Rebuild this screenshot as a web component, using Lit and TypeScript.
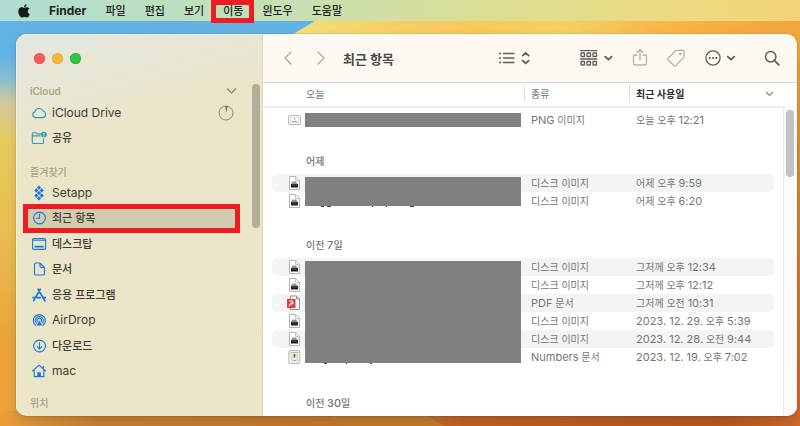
import { LitElement, html, svg, css, nothing, TemplateResult } from "lit";
import { customElement, property } from "lit/decorators.js";
import { classMap } from "lit/directives/class-map.js";

const latinRun = /([A-Za-z0-9.:]+(?: [A-Za-z0-9.:]+)*)/;

/** Sets Latin letters and digits one step larger than the Hangul beside them. */
const mixed = (text: string) =>
  text.split(latinRun).map((part, i) => (i % 2 ? html`<span class="latin">${part}</span>` : part));

const mixedStyles = css`
  .latin {
    font-size: 11px;
  }
`;

const shared = css`
  :host,
  * {
    box-sizing: border-box;
  }
  button {
    font: inherit;
    color: inherit;
    background: none;
    border: 0;
    padding: 0;
    margin: 0;
  }
  svg {
    display: block;
    flex: none;
  }
`;

const sidebarIcons: Record<string, TemplateResult> = {
  cloud: svg`<path d="M4.600 12.600a3 3 0 0 1-.6-5.900A4.300 4.300 0 0 1 12.100 6a3.400 3.400 0 0 1-.2 6.600z" />`,
  shared: svg`<path d="M10 3.900H6.600L5.500 2.700H2.300Q1.300 2.700 1.300 3.800v8.600q0 1.100 1.100 1.100h9q1.100 0 1.100-1.100V9M1.300 5.900H9" />
    <circle class="solid" cx="12.900" cy="4.600" r="2.900" />
    <circle class="hole" cx="12.900" cy="3.800" r="0.900" /><path class="hole" d="M11.400 6.500q1.500-2 3 0z" />`,
  setapp: svg`<g class="solid">
    <path d="M8 .6l2.100 2.100L8 4.800 5.900 2.700z" /><path d="M5.300 3.300l2.100 2.100-2.100 2.100-2.100-2.100z" /><path d="M10.700 3.300l2.100 2.100-2.100 2.100-2.100-2.100z" />
    <path d="M8 5.900l2.100 2.100L8 10.100 5.900 8z" /><path d="M5.300 8.500l2.100 2.100-2.100 2.100-2.100-2.100z" /><path d="M10.700 8.500l2.100 2.100-2.100 2.100-2.100-2.100z" />
    <path d="M8 11.200l2.100 2.100L8 15.400l-2.100-2.100z" /></g>`,
  clock: svg`<circle cx="8.500" cy="8" r="5.900" /><path d="M8.500 4.300V8.300H5.300" />`,
  desktop: svg`<rect x="1.600" y="2.600" width="13" height="10.800" rx="1.200" /><path d="M1.600 4.300h13" /><path class="thick" d="M4.300 10.700h7.600" />`,
  document: svg`<path d="M9 2H4.800Q3.500 2 3.500 3.300v9.400Q3.500 14 4.800 14h7.400q1.300 0 1.300-1.300V6.500zM9 2v3.300q0 1.200 1.200 1.200h3.300" />`,
  apps: svg`<path class="thick" d="M7.100 2.200l4.800 8.300 2 3.300M9.300 2.200L4.500 10.500M1.900 10.600h7.300M11.900 10.600h2.500M3.500 12.300l-.8 1.400" />`,
  airdrop: svg`<path d="M4.900 13.600a6 6 0 1 1 6.800 0M5.600 11.700a4.100 4.100 0 1 1 5.400 0M6.700 9.900a2.200 2.200 0 1 1 3.200 0" />
    <path class="solid" d="M8.300 8.600l2.600 4.800H5.700z" />`,
  download: svg`<circle cx="8.500" cy="8" r="5.900" /><path d="M8.500 4.700v6.200M6.200 8.700l2.300 2.400 2.300-2.400" />`,
  home: svg`<path d="M1.500 8L8 2.200 14.500 8M3.200 7v6.600h9.700V7M12.200 5.600V3.200" /><path class="solid" d="M6.300 13.600V9.200h3.500v4.400z" />`,
};

@customElement("desktop-wallpaper")
class DesktopWallpaper extends LitElement {
  static styles = css`
    :host {
      display: block;
    }
    svg {
      display: block;
      width: 100%;
      height: 100%;
    }
  `;
  render() {
    return html`<svg viewBox="0 0 800 426" preserveAspectRatio="none" aria-hidden="true">
      <defs>
        <linearGradient id="top" gradientUnits="userSpaceOnUse" x1="0" x2="800"><stop offset="0.350" stop-color="#f4e07e" /><stop offset="0.500" stop-color="#f8ce62" /><stop offset="0.600" stop-color="#f7c859" />
          <stop offset="0.700" stop-color="#f5d164" /><stop offset="0.800" stop-color="#f7bd4d" /><stop offset="0.880" stop-color="#f6b042" /><stop offset="1" stop-color="#f2a53a" /></linearGradient>
        <linearGradient id="left" x2="0" y2="1"><stop offset="0.130" stop-color="#62b3e4" /><stop offset="0.190" stop-color="#8ebfce" />
          <stop offset="0.240" stop-color="#d3ca9f" /><stop offset="0.330" stop-color="#e6c95f" /><stop offset="0.550" stop-color="#e8bd51" /><stop offset="0.800" stop-color="#e9a33c" /><stop offset="1" stop-color="#ee9f3b" /></linearGradient>
        <linearGradient id="bottom" gradientUnits="userSpaceOnUse" x1="0" x2="800"><stop offset="0" stop-color="#ec9f3b" /><stop offset="0.050" stop-color="#d68d36" /><stop offset="0.120" stop-color="#c47c31" /><stop offset="0.500" stop-color="#bf7129" />
          <stop offset="0.580" stop-color="#bb5f22" /><stop offset="0.900" stop-color="#b1571f" /><stop offset="0.970" stop-color="#c06025" /><stop offset="1" stop-color="#d0672b" /></linearGradient>
        <linearGradient id="right" x2="0" y2="1"><stop offset="0" stop-color="#f0a238" /><stop offset="0.300" stop-color="#d98a30" /><stop offset="1" stop-color="#d0652a" /></linearGradient>
      </defs>
      <rect width="800" height="426" fill="url(#left)" />
      <path d="M0 21h315L290 36H0z" fill="#62b3e4" />
      <path d="M315 21H800v100H290V36z" fill="url(#top)" />
      <rect x="700" y="60" width="100" height="350" fill="url(#right)" />
      <rect y="410" width="800" height="16" fill="url(#bottom)" />
      <path d="M326 412l16 14h104l-24-14z" fill="#bf782b" />
    </svg>`;
  }
}

@customElement("menu-bar")
class MenuBar extends LitElement {
  static menus = ["파일", "편집", "보기", "이동", "윈도우", "도움말"];
  static styles = [
    shared,
    css`
      :host {
        display: flex;
        align-items: center;
        gap: 19px;
        height: 21px;
        padding: 0 18px;
        color: #1d241f;
        font-size: 11px;
        font-weight: 500;
        line-height: 16px;
        background: linear-gradient(90deg, #b0dcd5, #bbdfc2 18%, #c8e0b2 38%, #dcde92 62%, #ecda80 85%, #f4d378);
      }
      .app {
        font-size: 12px;
        font-weight: 700;
      }
      .menu {
        position: relative;
        white-space: nowrap;
      }
      .marked::after {
        content: "";
        position: absolute;
        inset: -3px -11px -4px -12px;
        border: 5px solid #ee1c24;
      }
    `,
  ];
  render() {
    return html`
      <button class="menu" aria-label="Apple">
        <svg width="12" height="14" viewBox="0 0 12 14" fill="#161c19">
          <path d="M8.600.3c.1 1.500-1.200 2.900-2.600 2.900C5.800 1.800 7.200.4 8.600.3zM6.200 3.900c.6 0 1.300-.6 2.500-.6 1.100 0 2.100.6 2.700 1.400-2.300 1.300-2 4.600.4 5.600-.5 1.400-1.700 3.300-2.900 3.300-.9 0-1.300-.5-2.400-.5s-1.500.5-2.300.5C2.500 13.600.3 10.300.3 7.400c0-2.700 1.700-4.100 3.400-4.100 1.100 0 1.900.6 2.500.6z" />
        </svg>
      </button>
      <button class="menu app">Finder</button>
      ${MenuBar.menus.map((m) => html`<button class=${classMap({ menu: true, marked: m === "이동" })}>${m}</button>`)}
    `;
  }
}

interface Place {
  icon: string;
  label: string;
  teal?: boolean;
  progress?: boolean;
  current?: boolean;
}

@customElement("finder-sidebar")
class FinderSidebar extends LitElement {
  static cloud: Place[] = [
    { icon: "cloud", label: "iCloud Drive", teal: true, progress: true },
    { icon: "shared", label: "공유", teal: true },
  ];
  static favourites: Place[] = [
    { icon: "setapp", label: "Setapp" },
    { icon: "clock", label: "최근 항목", current: true },
    { icon: "desktop", label: "데스크탑" },
    { icon: "document", label: "문서" },
    { icon: "apps", label: "응용 프로그램" },
    { icon: "airdrop", label: "AirDrop" },
    { icon: "download", label: "다운로드" },
    { icon: "home", label: "mac" },
  ];
  static styles = [
    shared,
    css`
      :host {
        position: relative;
        display: flex;
        flex-direction: column;
        background: linear-gradient(165deg, #e3e7e1 0, #e8e6d6 12%, #eae5c8 28%, #ebe6c8);
        border-right: 1px solid #e0d9b4;
        box-shadow: inset 1px 1px 0 #f3f1e2;
        color: #3d3e33;
        font-size: 11px;
        font-weight: 500;
      }
      .lights {
        display: flex;
        align-items: center;
        gap: 7px;
        height: 48px;
        padding-left: 18px;
      }
      .light {
        width: 11px;
        height: 11px;
        border-radius: 50%;
        background: #fc5b57;
        box-shadow: inset 0 0 0 1px #e2463f80;
      }
      .minimise {
        background: #fbb53f;
        box-shadow: inset 0 0 0 1px #dfa02e80;
      }
      .zoom {
        background: #2fc546;
        box-shadow: inset 0 0 0 1px #1fa83480;
      }
      h2 {
        display: flex;
        align-items: center;
        justify-content: space-between;
        margin: 0;
        height: 18px;
        padding: 0 25px 0 14px;
        font-size: 10px;
        font-weight: 500;
        color: #a19e87;
      }
      ul {
        display: flex;
        flex-direction: column;
        list-style: none;
        margin: 0 27px 11px 12px;
        padding: 0;
      }
      .cloud-list {
        min-height: 51px;
      }
      .favourites {
        min-height: 204px;
        margin-bottom: 9px;
      }
      li {
        display: flex;
        flex: 1;
        align-items: center;
      }
      .place {
        position: relative;
        display: flex;
        align-items: center;
        gap: 5px;
        width: 100%;
        height: 19px;
        padding-left: 3px;
        text-align: left;
        line-height: 18px;
      }
      .place .word {
        flex: 1;
      }
      .place.latin-name {
        font-size: 12px;
        font-weight: 400;
      }
      .current {
        background: #d1ccae;
      }
      .current::after {
        content: "";
        position: absolute;
        inset: -5px;
        border: 5px solid #ee1c24;
      }
      .glyph {
        fill: none;
        stroke: #1b77e0;
        stroke-width: 1.100;
        stroke-linecap: round;
        stroke-linejoin: round;
      }
      .glyph.teal {
        stroke: #2b9fae;
      }
      .solid {
        fill: #1273ea;
        stroke: none;
      }
      .teal .solid {
        fill: #2b9fae;
      }
      .hole {
        fill: #ebe6c8;
        stroke: none;
      }
      .thick {
        stroke-width: 1.700;
      }
      .line {
        fill: none;
        stroke: #8d8a76;
      }
      .thumb {
        position: absolute;
        top: 50px;
        right: 2px;
        width: 8px;
        height: 144px;
        border-radius: 4px;
        background: #b2af99;
      }
    `,
  ];
  private place(p: Place) {
    return html`<li>
      <button class=${classMap({ place: true, current: !!p.current, "latin-name": /^[A-Za-z ]+$/.test(p.label) })}>
        <svg class=${classMap({ glyph: true, teal: !!p.teal })} width="16" height="16" viewBox="0 0 16 16">${sidebarIcons[p.icon]}</svg>
        <span class="word">${p.label}</span>
        ${p.progress
          ? html`<svg class="line" width="17" height="16" viewBox="0 0 17 16"><circle cx="8" cy="8" r="7" /><path fill="#6f6d5c" stroke="none" d="M8 8L7.300 1h2.500z" /></svg>`
          : nothing}
      </button>
    </li>`;
  }
  render() {
    return html`
      <div class="lights">
        <button class="light" aria-label="닫기"></button>
        <button class="light minimise" aria-label="최소화"></button>
        <button class="light zoom" aria-label="확대"></button>
      </div>
      <h2>iCloud <svg class="line" width="11" height="8" viewBox="0 0 11 8"><path stroke-width="1.300" d="M1 1.500l4.500 4.500L10 1.500" /></svg></h2>
      <ul class="cloud-list">${FinderSidebar.cloud.map((p) => this.place(p))}</ul>
      <h2>즐겨찾기</h2>
      <ul class="favourites">${FinderSidebar.favourites.map((p) => this.place(p))}</ul>
      <h2>위치</h2>
      <div class="thumb"></div>
    `;
  }
}

@customElement("finder-toolbar")
class FinderToolbar extends LitElement {
  static styles = [
    shared,
    css`
      :host {
        display: flex;
        align-items: center;
        height: 49px;
        padding: 0 17px;
        background: #fdf8f2;
        border-bottom: 1px solid #dad7d3;
      }
      svg {
        fill: none;
        stroke: #5f5e5b;
        stroke-width: 1.300;
        stroke-linecap: round;
        stroke-linejoin: round;
      }
      .faint svg {
        stroke: #b4b1ad;
      }
      .bold {
        stroke-width: 1.800;
      }
      .dot {
        fill: #5f5e5b;
        stroke: none;
      }
      h1 {
        flex: 1;
        margin: 0;
        padding-left: 14px;
        font-size: 13px;
        font-weight: 700;
        color: #4a4947;
        white-space: nowrap;
      }
      .nav {
        display: flex;
        gap: 17px;
      }
      .tools {
        display: flex;
        align-items: center;
        gap: 19px;
      }
      .view {
        margin-right: 31px;
      }
      .search {
        margin-left: 8px;
      }
    `,
  ];
  render() {
    return html`
      <div class="nav">
        <button class="faint" aria-label="뒤로"><svg width="16" height="16" viewBox="0 0 16 16"><path stroke-width="1.500" d="M11 2L5 8l6 6" /></svg></button>
        <button class="faint" aria-label="앞으로"><svg width="16" height="16" viewBox="0 0 16 16"><path stroke-width="1.500" d="M5 2l6 6-6 6" /></svg></button>
      </div>
      <h1>최근 항목</h1>
      <div class="tools">
        <button class="view" aria-label="목록">
          <svg width="32" height="16" viewBox="0 0 32 16">
            <path d="M5.500 3.500h10.500M5.500 8h10.500M5.500 12.500h10.500" />
            <circle class="dot" cx="2" cy="3.500" r="1" /><circle class="dot" cx="2" cy="8" r="1" /><circle class="dot" cx="2" cy="12.500" r="1" />
            <path class="bold" d="M24.700 5.600L27.700 2.800l3 2.800M24.700 10.600l3 2.800 3-2.800" />
          </svg>
        </button>
        <button aria-label="그룹">
          <svg width="33" height="18" viewBox="0 0 33 18">
            <path d="M.7 1.600h16M.7 10h16" />
            <rect x="1" y="4" width="3.500" height="3.500" rx=".6" /><rect x="7" y="4" width="3.500" height="3.500" rx=".6" /><rect x="13" y="4" width="3.500" height="3.500" rx=".6" />
            <rect x="1" y="12.500" width="3.500" height="3.500" rx=".6" /><rect x="7" y="12.500" width="3.500" height="3.500" rx=".6" /><rect x="13" y="12.500" width="3.500" height="3.500" rx=".6" />
            <path class="bold" d="M25.200 7.700l3.200 3 3.200-3" />
          </svg>
        </button>
        <button class="faint" aria-label="공유">
          <svg width="16" height="20" viewBox="0 0 16 20"><path d="M5 7H2.800Q1.500 7 1.500 8.300v7.400q0 1.300 1.300 1.300h10.400q1.300 0 1.300-1.300V8.300Q14.500 7 13.200 7H11M8 12V1.500M5.300 4.200L8 1.500l2.700 2.700" /></svg>
        </button>
        <button class="faint" aria-label="태그">
          <svg width="18" height="18" viewBox="0 0 18 18"><path d="M10 1.400l5-.2q2 0 2 2v4q0 1-.7 1.700l-7.400 7.500q-1.100 1-2.200 0L1.300 11.200q-1-1.100 0-2.200L8.500 2q.6-.6 1.500-.6z" /><circle cx="13.200" cy="5" r=".6" /></svg>
        </button>
        <button aria-label="더 보기">
          <svg width="33" height="18" viewBox="0 0 33 18"><circle cx="9" cy="9" r="7.100" /><circle class="dot" cx="5.700" cy="9" r="1.100" /><circle class="dot" cx="9" cy="9" r="1.100" /><circle class="dot" cx="12.300" cy="9" r="1.100" /><path class="bold" d="M23.800 7.700l3.200 3 3.200-3" /></svg>
        </button>
        <button class="search" aria-label="검색">
          <svg width="16" height="16" viewBox="0 0 16 16"><circle stroke-width="1.500" cx="6.700" cy="6.700" r="5.200" /><path class="bold" d="M10.700 10.700l4.100 4.100" /></svg>
        </button>
      </div>
    `;
  }
}

type FileKind = "png" | "dmg" | "pdf" | "numbers";
interface FileRow {
  icon: FileKind;
  kind: string;
  date: string;
}
interface FileGroup {
  name: string;
  /** Tips of the covered names that show below the grey block, as a path. */
  tips?: string;
  rows: FileRow[];
}

const fileIcons: Record<FileKind, TemplateResult> = {
  png: svg`<rect x=".5" y="3.500" width="12" height="9" rx="1.500" fill="#f4f5f5" stroke="#b9bcbc" /><rect x="2.500" y="5.500" width="8" height="5" fill="#fff" stroke="#cfd3d2" stroke-width=".7" /><path d="M4 9.500h5M6.500 6.300v2" stroke="#8ea7a4" stroke-width=".9" />`,
  dmg: svg`<path d="M1.500 1.500h6l4 4v9h-10z" fill="#fff" stroke="#b5b5b5" /><path d="M7.500 1.500v4h4" fill="none" stroke="#b5b5b5" stroke-width=".8" /><path d="M4.500 6.500h3.500l1.700 2.500H3z" fill="#8c9792" /><path d="M3 9h7v3.500H3z" fill="#17201d" /><path d="M4 10h5" stroke="#68756f" stroke-width=".7" />`,
  pdf: svg`<path d="M2.500 1h6l3 3v10.500h-9z" fill="#fff" stroke="#8e9494" /><path d="M8.500 1v3h3" fill="none" stroke="#8e9494" /><rect x="-1" y="4" width="8.500" height="9" fill="#e8393c" /><path d="M1.300 6.200q2.500-1 3.500.5 0 1.800-2.800 2.200M.8 11.300q1.400-2.500 2.800-2.400t1.800-.8" fill="none" stroke="#fff" stroke-width="1.100" />`,
  numbers: svg`<rect x=".8" y="1.500" width="11" height="13" rx="1" fill="#eeefee" stroke="#b7b9b8" /><path d="M2.500 3.500h7.800" stroke="#e3b45f" /><path d="M3 6h1.600M8.500 6h1.600M3 8.500h1.600M8.500 8.500h1.600M3 11h2M8 11h2" stroke="#b7b9b8" /><path d="M6.500 5v3.500" stroke="#4d5451" stroke-width="1.600" /><path d="M5.700 11.500h1.800" stroke="#777d7a" />`,
};

@customElement("file-list")
class FileList extends LitElement {
  @property({ attribute: false }) groups: FileGroup[] = [];
  static styles = [
    shared,
    mixedStyles,
    css`
      :host {
        display: flex;
        flex: 1;
        background: #fff;
        color: #757575;
        font-size: 10px;
        line-height: 18px;
      }
      table {
        display: block;
        flex: 1;
        min-width: 0;
      }
      thead,
      tbody,
      td,
      th {
        display: block;
      }
      td,
      th {
        padding: 0;
        text-align: left;
        font-weight: 400;
        white-space: nowrap;
      }
      tr {
        display: grid;
        grid-template-columns: minmax(0, 1fr) 105px 145px;
        align-items: center;
        margin: 0 9px;
      }
      .columns {
        height: 25px;
        margin: 0;
        padding: 0 9px 2px;
        border-bottom: 2px solid #ececec;
      }
      .columns th + th {
        display: flex;
        align-items: center;
        justify-content: space-between;
        height: 17px;
        padding-left: 6px;
        border-left: 1px solid #dcdcdc;
      }
      .first {
        padding-left: 34px;
      }
      .columns .sorted {
        font-weight: 700;
        color: #2c2c2c;
      }
      tbody {
        position: relative;
      }
      .today {
        padding-top: 3px;
      }
      .file {
        height: 18px;
        border-radius: 5px;
      }
      .striped .file:nth-child(even) {
        background: #f3f4f4;
      }
      .file td {
        padding-left: 7px;
      }
      .file .name {
        padding-left: 16px;
      }
      .name svg {
        overflow: visible;
      }
      .heading {
        grid-template-columns: 1fr;
        align-items: end;
        height: 48px;
        padding: 0 0 4px 34px;
      }
      .today + tbody .heading {
        height: 45px;
      }
      tbody:last-child {
        padding-top: 2px;
      }
      .heading th {
        font-weight: 500;
      }
      .cover {
        display: block;
        position: absolute;
        left: 33px;
        right: 253px;
        top: 51px;
        bottom: 3px;
        background: #808080;
      }
      .today .cover {
        top: 5px;
        bottom: 2px;
      }
      .today + tbody .cover {
        top: 48px;
        bottom: 4px;
      }
      .cover td {
        position: absolute;
        top: 100%;
        left: 0;
      }
      .scroll {
        width: 14px;
        margin-top: 24px;
        padding: 3px 3px 0 2px;
        background: #fafafa;
        border-left: 1px solid #e9e9e9;
      }
      .thumb {
        height: 67px;
        border-radius: 4px;
        background: #c2c2c2;
      }
    `,
  ];
  render() {
    return html`
      <table>
        <thead>
          <tr class="columns">
            <th class="first" scope="col">오늘</th>
            <th scope="col">종류</th>
            <th class="sorted" scope="col">최근 사용일 <svg width="9" height="6" viewBox="0 0 9 6" fill="none" stroke="#888" stroke-width="1.200"><path d="M1 1l3.500 3.500L8 1" /></svg></th>
          </tr>
        </thead>
        ${this.groups.map(
          (g) => html`<tbody class=${classMap({ today: !g.name, striped: !!g.name })}>
            ${g.name ? html`<tr class="heading"><th scope="rowgroup">${mixed(g.name)}</th></tr>` : nothing}
            ${g.rows.map(
              (r) => html`<tr class="file">
                <td class="name"><svg width="13" height="16" viewBox="0 0 13 16">${fileIcons[r.icon]}</svg></td>
                <td>${mixed(r.kind)}</td>
                <td>${mixed(r.date)}</td>
              </tr>`,
            )}
            ${g.rows.length
              ? html`<tr class="cover" aria-hidden="true">
                  <td>${g.tips ? html`<svg width="200" height="2" viewBox="0 0 200 2" stroke="#444" fill="none"><path d=${g.tips} /></svg>` : nothing}</td>
                </tr>`
              : nothing}
          </tbody>`,
        )}
      </table>
      <div class="scroll"><div class="thumb"></div></div>
    `;
  }
}

@customElement("app-root")
class AppRoot extends LitElement {
  static groups: FileGroup[] = [
    { name: "", rows: [{ icon: "png", kind: "PNG 이미지", date: "오늘 오후 12:21" }] },
    {
      name: "어제",
      tips: "M16 .5h3M22 .5h4M67 .5h1M81 .5h1M105 .5h4",
      rows: [
        { icon: "dmg", kind: "디스크 이미지", date: "어제 오후 9:59" },
        { icon: "dmg", kind: "디스크 이미지", date: "어제 오후 6:20" },
      ],
    },
    {
      name: "이전 7일",
      tips: "M19 .5h3M41 .5h1M65 .5h2",
      rows: [
        { icon: "dmg", kind: "디스크 이미지", date: "그저께 오후 12:34" },
        { icon: "dmg", kind: "디스크 이미지", date: "그저께 오후 12:12" },
        { icon: "pdf", kind: "PDF 문서", date: "그저께 오전 10:31" },
        { icon: "dmg", kind: "디스크 이미지", date: "2023. 12. 29. 오후 5:39" },
        { icon: "dmg", kind: "디스크 이미지", date: "2023. 12. 28. 오전 9:44" },
        { icon: "numbers", kind: "Numbers 문서", date: "2023. 12. 19. 오후 7:02" },
      ],
    },
    { name: "이전 30일", rows: [] },
  ];
  static styles = css`
    :host {
      position: relative;
      display: flex;
      flex-direction: column;
      min-height: 100vh;
      overflow: hidden;
      font-family: Inter, "Noto Sans CJK KR", sans-serif;
    }
    desktop-wallpaper {
      position: absolute;
      inset: 0;
    }
    menu-bar {
      position: relative;
      z-index: 1;
    }
    .window {
      position: relative;
      display: grid;
      grid-template-columns: 247px minmax(0, 1fr);
      flex: 1;
      margin: 13px 3px 11px 16px;
      border-radius: 10px;
      overflow: hidden;
      box-shadow: 0 0 1px #00000080, 0 3px 8px #00000020;
    }
    .pane {
      display: flex;
      flex-direction: column;
      min-width: 0;
    }
  `;
  render() {
    return html`
      <desktop-wallpaper></desktop-wallpaper>
      <menu-bar></menu-bar>
      <main class="window">
        <finder-sidebar></finder-sidebar>
        <section class="pane">
          <finder-toolbar></finder-toolbar>
          <file-list .groups=${AppRoot.groups}></file-list>
        </section>
      </main>
    `;
  }
}
